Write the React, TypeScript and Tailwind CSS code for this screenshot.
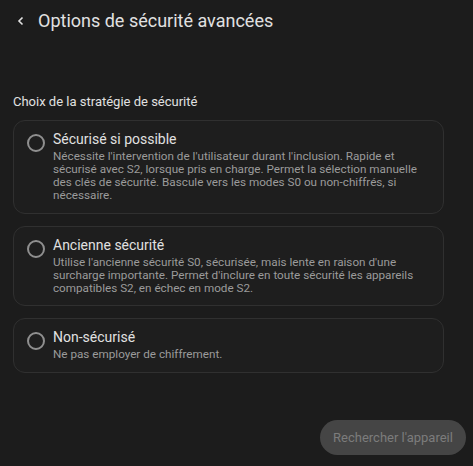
import React from "react";

const options = [
  {
    title: "Sécurisé si possible",
    desc: "Nécessite l'intervention de l'utilisateur durant l'inclusion. Rapide et sécurisé avec S2, lorsque pris en charge. Permet la sélection manuelle des clés de sécurité. Bascule vers les modes S0 ou non-chiffrés, si nécessaire.",
  },
  {
    title: "Ancienne sécurité",
    desc: "Utilise l'ancienne sécurité S0, sécurisée, mais lente en raison d'une surcharge importante. Permet d'inclure en toute sécurité les appareils compatibles S2, en échec en mode S2.",
  },
  {
    title: "Non-sécurisé",
    desc: "Ne pas employer de chiffrement.",
  },
];

export default function App() {
  return (
    <div
      className="w-[473px] h-[466px] bg-[#1c1c1c] flex flex-col overflow-hidden"
      style={{ fontFamily: "Roboto, 'Liberation Sans', sans-serif" }}
    >
      <div className="h-[42px] flex items-center">
        <div className="w-[38px] flex items-center justify-center pl-[4px]">
          <svg width="10" height="10" viewBox="0 0 10 10" fill="none">
            <path d="M6.5 1.5 L3 5 L6.5 8.5" stroke="#e1e1e1" strokeWidth="1.6" />
          </svg>
        </div>
        <div className="text-[18px] text-[#e1e1e1] leading-[22px]">Options de sécurité avancées</div>
      </div>
      <div className="px-[13px] pt-[52px]">
        <div className="text-[13px] text-[#e1e1e1] leading-[16px] mb-[10px]">
          Choix de la stratégie de sécurité
        </div>
        <div className="flex flex-col gap-[12px] w-[431px]">
          {options.map((o) => (
            <div
              key={o.title}
              className="border border-[#303030] rounded-[12px] bg-[#1e1e1e] flex pl-[13px] pr-[18px] pt-[10px] pb-[10.5px]"
            >
              <div className="w-[26px] shrink-0 pt-[3px]">
                <div className="w-[18px] h-[18px] rounded-full border-2 border-[#8f8f8f]" />
              </div>
              <div className="flex flex-col">
                <div className="text-[14px] leading-[17px] text-[#e1e1e1]">{o.title}</div>
                <div className="text-[11.7px] leading-[13px] text-[#9b9b9b] mt-[2px]">{o.desc}</div>
              </div>
            </div>
          ))}
        </div>
      </div>
      <div className="flex-1" />
      <div className="flex justify-end pr-[7px] pb-[11px]">
        <div className="h-[35px] w-[146px] rounded-full bg-[#454545] flex items-center justify-center text-[13px] text-[#7c7c7c]">
          Rechercher l'appareil
        </div>
      </div>
    </div>
  );
}
